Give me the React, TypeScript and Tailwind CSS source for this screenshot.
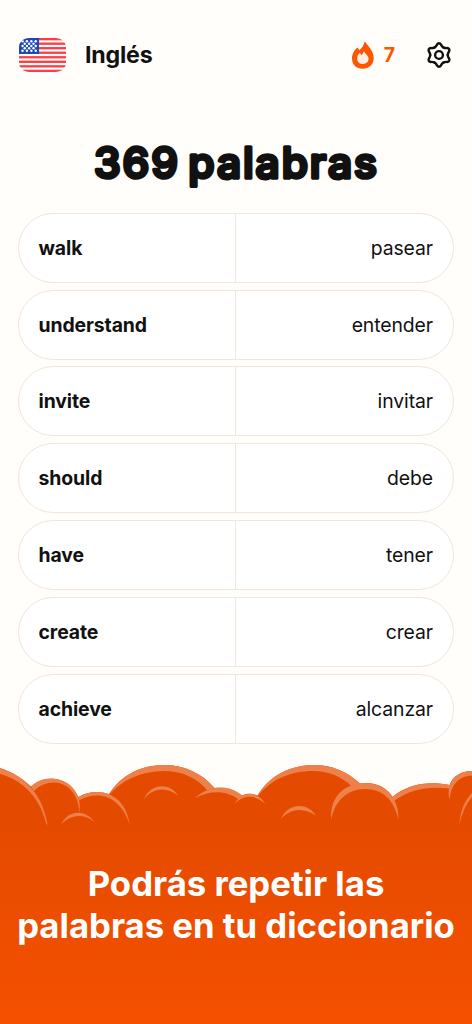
import React from 'react';

const words = [
  { word: 'walk', translation: 'pasear' },
  { word: 'understand', translation: 'entender' },
  { word: 'invite', translation: 'invitar' },
  { word: 'should', translation: 'debe' },
  { word: 'have', translation: 'tener' },
  { word: 'create', translation: 'crear' },
  { word: 'achieve', translation: 'alcanzar' },
];

const FlagIcon: React.FC = () => (
  <svg width="47" height="34" viewBox="0 0 48 34" preserveAspectRatio="none" aria-hidden="true">
    <defs>
      <clipPath id="flag">
        <path d="M11 0H37C43 0 48 4 48 9V25C48 30 43 34 37 34H11C5 34 0 30 0 25V9C0 4 5 0 11 0Z" />
      </clipPath>
    </defs>
    <g clipPath="url(#flag)">
      <rect width="48" height="34" fill="#fff" />
      {Array.from({ length: 8 }).map((_, i) => (
        <rect key={i} y={i * 4.53} width="48" height="2.3" fill="#ff3b43" />
      ))}
      <rect width="20.5" height="16" fill="#1c49b8" />
      {Array.from({ length: 5 }).map((_, row) =>
        Array.from({ length: row % 2 === 0 ? 4 : 3 }).map((_, col) => (
          <circle key={`${row}-${col}`} cx={3.6 + col * 4.5 + (row % 2) * 2.25} cy={3.3 + row * 2.35} r="1.25" fill="#fff" />
        ))
      )}
    </g>
  </svg>
);

const FlameIcon: React.FC = () => (
  <svg width="24" height="28" viewBox="0 0 24 28" aria-hidden="true">
    <path
      d="M15.3 2C18.2 6.5 23.7 10.7 23.7 18C23.7 24.6 19 28.7 12.8 28.7C6.6 28.7 2 24.5 2 18.4C2 13.7 4.6 9.8 7.3 7.4C8.1 8.1 8.9 9.1 9.4 10.3C12.2 7.9 13.7 5.3 14.3 2.6C14.5 1.8 14.9 1.5 15.3 2Z"
      fill="#ff5500"
      transform="translate(-1 -1)"
    />
    <path
      d="M13.9 11.2C15.7 14.1 18.6 15.8 18.6 18.8C18.6 21.9 16.2 24 12.9 24C9.6 24 7.2 21.9 7.2 18.7C7.2 16 8.5 14 9.8 12.6L11.3 15.2C12.5 14 13.3 13.1 13.9 11.2Z"
      fill="#ffeee6"
      transform="translate(-1 -1)"
    />
  </svg>
);

const GearIcon: React.FC = () => (
  <svg width="28" height="28" viewBox="-14 -14 28 28" fill="none" stroke="#111" strokeWidth="2.4" strokeLinecap="round" aria-hidden="true">
    <circle r="3.9" />
    {[0, 60, 120, 180, 240, 300].map((angle) => (
      <path key={angle} transform={`rotate(${angle})`} d="M-4.4 -7.6C-3.1 -8.4 -2.7 -9 -2 -10.4C-1 -12.2 1 -12.2 2 -10.4C2.7 -9 3.1 -8.4 4.4 -7.6" />
    ))}
  </svg>
);

const Clouds: React.FC = () => (
  <svg className="block w-full" height="66" viewBox="0 760 472 66" aria-hidden="true">
    <path
      d="M0 768C12 772 22 778 31 786.5C46 774 68 776 78.500 797C88 791 99 791 109 794C122 774 142 765 164 765C184 765 202 773 214.500 788C225 786.500 235 790 242 795.500C247 793 252 793 257.500 795.500C270 775 291 765 314 765C332 765 348 772 360 783.500C374 781 387 787 392.500 797C408 784 428 781 449.500 785C453 776 461 771 472 771V826H0Z"
      fill="#e54b00"
    />
    <g fill="#ee804b">
      <path d="M0 768C26 776 43 796 47.500 824.500H46.500C41 800 24 780 0 774Z" />
      <path d="M31 786.500C41 776 59 776 70 785C78 792 81 802 79.500 813C79 801 74 791 66 786C56 780 43 782 34 791Z" />
      <path d="M78.500 797C103 784 126 797 129.500 824C121 797 99 789 79 800.500Z" />
      <path d="M61 824.500C69 808.500 86 810 94.500 822C84 813.500 71 814 61 824.500Z" />
      <path d="M109 794C122 774 142 765 164 765C184 765 202 773 214.500 788L207 790C196 777 181 771 164 771C141 771 122 780 109 795Z" />
      <path d="M144 799C150 784 169 781 178.500 796C168 787 154 787 144 799Z" />
      <path d="M195 798C209 785 229 784 242 795.500L239.500 800C226 790 211 790 195 798Z" />
      <path d="M234.500 804C242 791 257 790 265.500 804C256 795 244 794 234.500 804Z" />
      <path d="M257.500 795.500C270 775 291 765 314 765C332 765 348 772 360 783.500L352 786.500C341 776 328 771 313 771C291 771 271 779 258 796Z" />
      <path d="M281 819C287 804 306 801 316 815.500C305 808 291 807 281 819Z" />
      <path d="M331.500 819.500C329 797 345 783 365 783C385 783 399 797 398.500 819.500C394 800 383 789 365 789C347 789 334 802 331.500 819.500Z" />
      <path d="M392.500 797C408 784 428 781 450 785V788.500C428 786 411 789 394.500 800.500Z" />
      <path d="M449.500 799.500C446 783 455 771 472 771V775.500C459 776 451 784 449.500 799.500Z" />
      <path d="M459.500 824.500C460 811 465 800 472 793V797C467 803 462 812 459.500 824.500Z" />
    </g>
  </svg>
);

// stroked with round joins so the letters get soft ends
const RoundedTitle: React.FC<{ text: string }> = ({ text }) => (
  <h1 className="mt-[23px] h-[60px] shrink-0">
    <svg className="block w-full" height="60" viewBox="0 0 472 60">
      <text
        x="235.500"
        y="45"
        textAnchor="middle"
        textLength="283"
        fill="#111"
        stroke="#111"
        strokeWidth="3.600"
        strokeLinejoin="round"
        className="text-[42.500px] font-medium [word-spacing:-5px]"
      >
        {text}
      </text>
    </svg>
  </h1>
);

const WordRow: React.FC<{ word: string; translation: string }> = ({ word, translation }) => (
  <li className="grid h-[70px] grid-cols-2 overflow-hidden rounded-full border border-[#f0e6d9] bg-white text-[19.400px] text-[#111]">
    <span className="flex items-center border-r border-[#f0e6d9] pt-px pl-[19.500px] font-bold tracking-[-0.1px]">{word}</span>
    <span className="flex items-center justify-end pt-px pr-5 tracking-[-0.1px]">{translation}</span>
  </li>
);

export default function App() {
  return (
    <div className="flex h-[1024px] w-[472px] flex-col overflow-hidden bg-[#fffefa] font-['Inter',sans-serif]">
      <header className="flex h-[110px] shrink-0 items-center pr-[19px] pl-[19px]">
        <FlagIcon />
        <span className="ml-[19px] pt-px text-[23.200px] font-bold tracking-[-0.2px] text-[#111]">Inglés</span>
        <div className="ml-auto flex items-center">
          <FlameIcon />
          <span className="ml-[9px] pt-px text-[19.500px] font-bold text-[#ff5500]">7</span>
          <div className="ml-[30px]">
            <GearIcon />
          </div>
        </div>
      </header>

      <RoundedTitle text="369 palabras" />

      <ul className="mt-[19.700px] flex shrink-0 flex-col gap-[6.900px] px-[18px]">
        {words.map((item) => (
          <WordRow key={item.word} word={item.word} translation={item.translation} />
        ))}
      </ul>

      <footer className="mt-auto flex h-[264px] shrink-0 flex-col">
        <Clouds />
        <div className="flex-1 bg-linear-to-b from-[#e54b00] to-[#f55000] pt-[36px] text-center text-[34.700px] leading-[42px] font-bold whitespace-nowrap text-white">
          <p>Podrás repetir las</p>
          <p>palabras en tu diccionario</p>
        </div>
      </footer>
    </div>
  );
}
